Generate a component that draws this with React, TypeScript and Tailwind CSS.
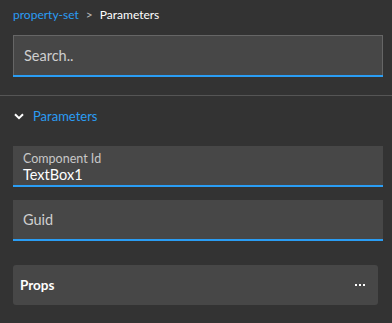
import React from 'react';

const font = { fontFamily: 'Lato, "Noto Sans", sans-serif' };

export default function App() {
  return (
    <div className="w-[392px] h-[323px] bg-[#333333] overflow-hidden" style={font}>
      {/* breadcrumb */}
      <div className="flex items-center h-[30px] px-[13px] text-[12px] leading-none">
        <span className="text-[#2a9df4]">property-set</span>
        <span className="text-[#bbbbbb] mx-[7px]">&gt;</span>
        <span className="text-white">Parameters</span>
      </div>

      {/* search */}
      <div className="pl-[13px] pr-[9px] pt-[5px]">
        <div className="h-[40px] bg-[#474747] border border-[#666666] border-b-0 flex items-center px-[10px]">
          <span className="text-[14.5px] text-[#cfcfcf]">Search..</span>
        </div>
        <div className="h-[2px] bg-[#2a9df4]" />
      </div>

      <div className="mt-[18px] h-px bg-[#555555]" />

      {/* section header */}
      <div className="flex items-center h-[41px] pl-[14px] gap-[9px]">
        <svg width="10" height="7" viewBox="0 0 10 7" fill="none">
          <path d="M1 1.2 L5 5.2 L9 1.2" stroke="#ffffff" strokeWidth="2" />
        </svg>
        <span className="text-[13px] text-[#2a9df4]">Parameters</span>
      </div>

      <div className="pl-[13px] pr-[9px] pt-[9px] flex flex-col">
        {/* component id */}
        <div className="h-[39px] bg-[#474747] px-[10px] pt-[6px] flex flex-col">
          <span className="text-[12.5px] leading-[14px] text-[#c8c8c8]">Component Id</span>
          <span className="text-[14.5px] leading-[18px] text-white">TextBox1</span>
        </div>
        <div className="h-[2px] bg-[#2a9df4]" />

        {/* guid */}
        <div className="mt-[13px] h-[39px] bg-[#474747] px-[10px] pt-[7px]">
          <span className="text-[14.5px] text-[#cfcfcf]">Guid</span>
        </div>
        <div className="h-[2px] bg-[#2a9df4]" />

        {/* props */}
        <div className="mt-[24px] mr-[5px] h-[40px] bg-[#474747] rounded-[3px] flex items-center justify-between pl-[7px] pr-[13px]">
          <span className="text-[13.5px] text-white font-bold">Props</span>
          <span className="flex gap-[2px]">
            <span className="w-[2px] h-[2px] bg-white" />
            <span className="w-[2px] h-[2px] bg-white" />
            <span className="w-[2px] h-[2px] bg-white" />
          </span>
        </div>
      </div>
    </div>
  );
}
